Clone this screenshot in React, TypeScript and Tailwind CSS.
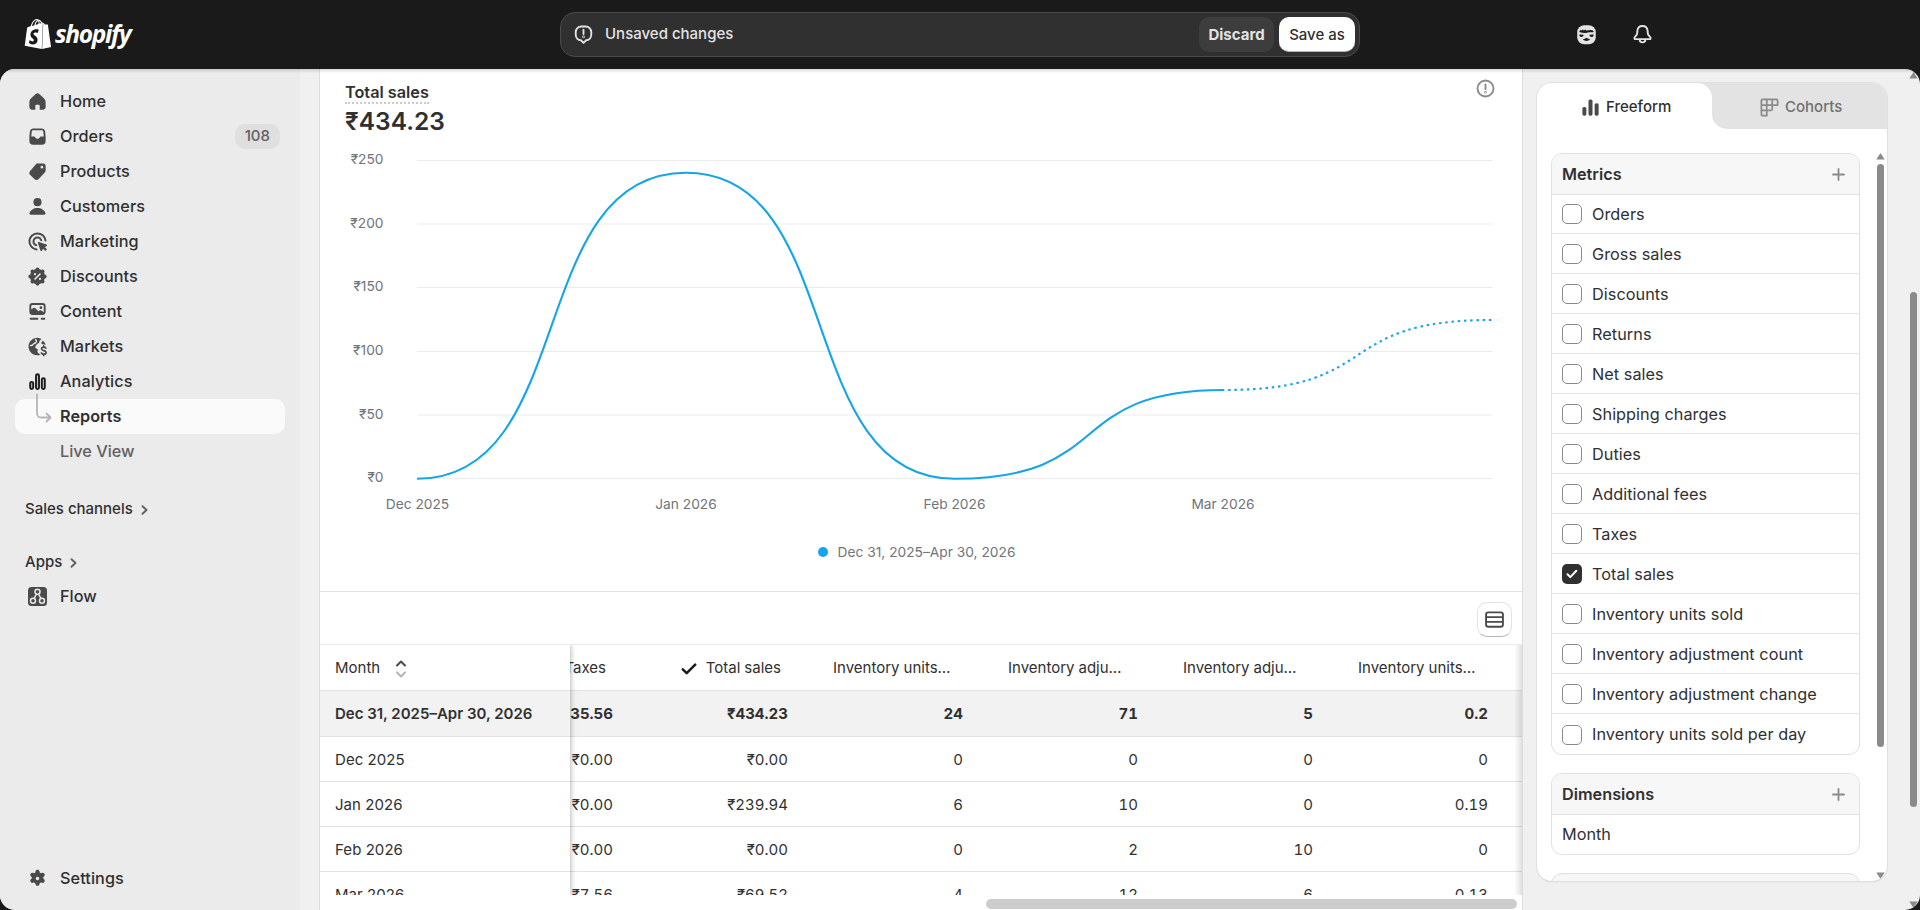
import React from 'react';
import { SiShopify } from 'react-icons/si';

const icons = {
  home: <path fillRule="evenodd" d="M8.6 4.05a2.1 2.1 0 0 1 2.8 0l3.7 3.3a4.2 4.2 0 0 1 1.4 3.15v3.75a2.25 2.25 0 0 1-2.25 2.25h-2.5v-3.25a.75.75 0 0 0-.75-.75h-2a.75.75 0 0 0-.75.75v3.25h-2.5a2.25 2.25 0 0 1-2.25-2.25v-3.75c0-1.2.5-2.35 1.4-3.15z" />,
  orders: <path fillRule="evenodd" d="M6.4 3.5a2.5 2.5 0 0 0-2.45 2.05l-.4 4.1q-.05.3-.05.6v3.25a3 3 0 0 0 3 3h7a3 3 0 0 0 3-3v-3.25q0-.3-.05-.6l-.4-4.1a2.5 2.5 0 0 0-2.45-2.05zm.1 1.5a1.1 1.1 0 0 0-1.1.95l-.4 4.05h2.2c.4 0 .75.25.9.6a2.05 2.05 0 0 0 3.8 0c.15-.35.5-.6.9-.6h2.2l-.4-4.05a1.1 1.1 0 0 0-1.1-.95z" />,
  products: <path fillRule="evenodd" d="M10.6 3.5h3.9a2 2 0 0 1 2 2v3.4a3 3 0 0 1-.85 2.1l-4.5 4.7a2.75 2.75 0 0 1-3.9.05l-2.8-2.7a2.75 2.75 0 0 1 0-3.95l4.1-4.75a2.8 2.8 0 0 1 2.05-.85m2.9 4.1a1.1 1.1 0 1 0 0-2.2 1.1 1.1 0 0 0 0 2.2" />,
  customers: <>
      <circle cx="10" cy="6.5" r="3.25" />
      <path d="M3.6 15.2c.8-2.5 3.4-4.1 6.4-4.1s5.6 1.6 6.4 4.1c.25.8-.4 1.4-1.1 1.4h-10.6c-.7 0-1.35-.6-1.1-1.4" />
    </>,
  marketing: <>
      <path fill="none" stroke="currentColor" strokeWidth="1.6" strokeLinecap="round" d="M16.4 9.2a6.45 6.45 0 1 0-7.2 7.2M13 9a3.2 3.2 0 1 0-4 4" />
      <path d="M10.3 11.2a.72.72 0 0 1 .9-.9l6 2.05a.72.72 0 0 1 .05 1.35l-1.5.7 1.45 1.45a.72.72 0 0 1 0 1l-.35.35a.72.72 0 0 1-1 0l-1.45-1.45-.7 1.5a.72.72 0 0 1-1.35-.05z" />
    </>,
  discounts: <>
      <circle cx="10" cy="10" r="6.1" />
      <circle cx="10" cy="4.3" r="1.6" />
      <circle cx="14" cy="6" r="1.6" />
      <circle cx="15.7" cy="10" r="1.6" />
      <circle cx="14" cy="14" r="1.6" />
      <circle cx="10" cy="15.7" r="1.6" />
      <circle cx="6" cy="14" r="1.6" />
      <circle cx="4.3" cy="10" r="1.6" />
      <circle cx="6" cy="6" r="1.6" />
      <path stroke="#ebebeb" strokeWidth="1.3" strokeLinecap="round" d="M12 8l-4 4" />
      <circle cx="8" cy="8.1" r=".85" fill="#ebebeb" />
      <circle cx="12" cy="11.9" r=".85" fill="#ebebeb" />
    </>,
  content: <>
      <path fillRule="evenodd" d="M6 3.25h8a2.5 2.5 0 0 1 2.5 2.5v4.5a2.5 2.5 0 0 1-2.5 2.5h-8a2.5 2.5 0 0 1-2.5-2.5v-4.5a2.5 2.5 0 0 1 2.5-2.5m-1 5.2 1.7-1.2a1.3 1.3 0 0 1 1.6.1l2.5 2.5.8-.6a1.3 1.3 0 0 1 1.5 0l1.9 1.3v-4.8a1 1 0 0 0-1-1h-8a1 1 0 0 0-1 1zm7.7-.45a1.1 1.1 0 1 0 0-2.2 1.1 1.1 0 0 0 0 2.2" />
      <path fill="none" stroke="currentColor" strokeWidth="1.5" strokeLinecap="round" d="M4.5 15.8h5.5M13.3 15.8h2.2" />
    </>,
  markets: <>
      <path d="M10 3a7 7 0 1 0 2.4 13.5l-1.7-1.2c-.8-.5-1-1.3-.6-2.1l.3-.8-1.7-1.1c-.6-.4-.7-1-.3-1.6l1.1-1.5c.5-.7 1.1-.5 1.6-1 .6-.6 0-1.4.8-2.1l1.3-1.1a7 7 0 0 0-3.2-1" />
      <path fill="none" stroke="#ebebeb" strokeWidth="1.1" strokeLinecap="round" strokeLinejoin="round" d="M8.4 4.3c.9.9 1 1.8.2 2.6-.7.6-1.8.6-2.3 1.5-.3.7-1 1-1.9.7" />
      <path d="M14.3 5.3l-1 1.3c-.5.65-.1 1.5.7 1.6l2.6.4a7 7 0 0 0-2.3-3.3" />
      <path fill="none" stroke="currentColor" strokeWidth="1.35" strokeLinecap="round" strokeLinejoin="round" d="M16.7 11.3c-.4-.6-1.1-.8-1.7-.8-1 0-1.8.5-1.8 1.35 0 2 3.7.9 3.7 2.9 0 .9-.9 1.4-1.9 1.4-.8 0-1.5-.3-1.9-.9M15 9.5v1M15 16.2v1" />
    </>,
  settings: <path fillRule="evenodd" d="M8.4 4.2c.15-.7.7-1.2 1.4-1.2h.4c.7 0 1.25.5 1.4 1.2l.2.9 1 .6.9-.3c.65-.2 1.4.05 1.7.65l.2.35c.35.6.2 1.35-.3 1.8l-.7.65v1.2l.7.6c.5.45.65 1.2.3 1.8l-.2.35c-.3.6-1.05.85-1.7.65l-.9-.3-1 .6-.2.9c-.15.7-.7 1.2-1.4 1.2h-.4c-.7 0-1.25-.5-1.4-1.2l-.2-.9-1-.6-.9.3c-.65.2-1.4-.05-1.7-.65l-.2-.35c-.35-.6-.2-1.35.3-1.8l.7-.6v-1.2l-.7-.65c-.5-.45-.65-1.2-.3-1.8l.2-.35c.3-.6 1.05-.85 1.7-.65l.9.3 1-.6zM10 11.3a1.4 1.4 0 1 0 0-2.8 1.4 1.4 0 0 0 0 2.8" />,
  analytics: <g fill="#c4c4c4" stroke="#1a1a1a" strokeWidth="1.5">
      <rect x="4.15" y="10.25" width="2.4" height="5.7" rx="1.2" />
      <rect x="8.8" y="4.15" width="2.4" height="11.8" rx="1.2" />
      <rect x="13.45" y="7.25" width="2.4" height="8.7" rx="1.2" />
    </g>
};

function Icon({ name }: { name: keyof typeof icons }) {
  return <svg viewBox="0 0 20 20" fill="currentColor" className="h-[25px] w-[25px] shrink-0 text-[#4a4a4a]">
      {icons[name]}
    </svg>;
}

const nav: { label: string; icon: keyof typeof icons; badge?: string }[] = [
  { label: 'Home', icon: 'home' },
  { label: 'Orders', icon: 'orders', badge: '108' },
  { label: 'Products', icon: 'products' },
  { label: 'Customers', icon: 'customers' },
  { label: 'Marketing', icon: 'marketing' },
  { label: 'Discounts', icon: 'discounts' },
  { label: 'Content', icon: 'content' },
  { label: 'Markets', icon: 'markets' },
  { label: 'Analytics', icon: 'analytics' }
];

const metrics = ['Orders', 'Gross sales', 'Discounts', 'Returns', 'Net sales', 'Shipping charges', 'Duties', 'Additional fees', 'Taxes', 'Total sales', 'Inventory units sold', 'Inventory adjustment count', 'Inventory adjustment change', 'Inventory units sold per day'];

// Long headings are already shortened to the column width
const columns = ['Taxes', 'Total sales', 'Inventory units…', 'Inventory adju…', 'Inventory adju…', 'Inventory units…'];

const totals = ['₹35.56', '₹434.23', '24', '71', '5', '0.2'];

const rows = [
  { month: 'Dec 2025', values: ['₹0.00', '₹0.00', '0', '0', '0', '0'] },
  { month: 'Jan 2026', values: ['₹0.00', '₹239.94', '6', '10', '0', '0.19'] },
  { month: 'Feb 2026', values: ['₹0.00', '₹0.00', '0', '2', '10', '0'] },
  { month: 'Mar 2026', values: ['₹7.56', '₹69.52', '4', '12', '6', '0.13'] }
];

function Header() {
  return <header className="flex h-[69px] shrink-0 items-start">
      <div className="flex w-[560px] items-center pl-[23px] pt-[19px] text-white">
        <SiShopify className="h-[30px] w-[30px]" />
        <span className="-mt-px ml-[2px] font-['Open_Sans'] text-[24.5px] leading-[30px] font-bold italic tracking-[-1.3px]">
          shopify
        </span>
      </div>
      <div className="mt-3 flex h-[45px] w-[800px] items-center rounded-[15px] border border-[#4a4a4a] bg-[#303030] pl-[10px] pr-[4px]">
        <svg viewBox="0 0 20 20" fill="none" stroke="#e3e3e3" strokeWidth="1.5" strokeLinecap="round" strokeLinejoin="round" className="h-[25px] w-[25px]">
          <path d="M8.2 3.6h3.6a4.4 4.4 0 0 1 4.4 4.4v2.2a4.4 4.4 0 0 1-4.1 4.4l-2.1 2.1-2.1-2.1a4.4 4.4 0 0 1-4.1-4.4v-2.2a4.4 4.4 0 0 1 4.4-4.4M10 6.2v3.4" />
          <circle cx="10" cy="11.9" r=".3" />
        </svg>
        <span className="ml-[9px] flex-1 text-[15px] font-[550] text-[#e3e3e3]">Unsaved changes</span>
        <button className="h-[35px] w-[75px] rounded-[10px] bg-[#3d3d3d] pt-px text-[15px] font-[650] text-[#e3e3e3]">Discard</button>
        <button className="ml-[5px] h-[35px] w-[76px] rounded-[10px] border-b border-[#b5b5b5] bg-white pt-[2px] text-[15px] font-[550] text-[#303030]">Save as</button>
      </div>
      <div className="flex items-center pl-[214px] pt-[22px]">
        <svg viewBox="0 0 20 20" className="h-[25px] w-[25px]">
          <rect x="2.6" y="2.5" width="14.8" height="15.3" rx="5.6" fill="#e3e3e3" />
          <path fill="#1a1a1a" d="M4.2 7.9c.1-.8.5-1.3 1-1.6l.8.5.9-.8 1 .7 1-.7.9.7 3.4-.3c1.6-.1 2.4.7 2.6 1.6-1.2.6-2.3.1-3.7.1-1.5 0-2.1.7-3.3.7-1.6 0-3.1-.4-4.6-.9" />
          <path fill="#1a1a1a" d="M4.3 9.9l3.4.2a1.8 1.8 0 0 1-3.3 1zM15.7 9.9l-3.4.2a1.8 1.8 0 0 0 3.3 1z" />
          <path d="M7 13.6q1.7.1 3-1 1.3 1.1 3 1-1.4 1.600-3 1.600t-3-1.600" fill="#1a1a1a" />
        </svg>
        <svg viewBox="0 0 20 20" fill="none" stroke="#e3e3e3" strokeWidth="1.5" strokeLinecap="round" strokeLinejoin="round" className="ml-[31px] h-[25px] w-[25px]">
          <path d="M10 3.2c-2.3 0-3.9 1.7-4.1 3.900l-.15 2a2.5 2.5 0 0 1-.6 1.400l-1.400 1.700c-.5.7-.2 1.500.7 1.500h11.100c.9 0 1.200-.8.7-1.500l-1.400-1.700a2.500 2.500 0 0 1-.6-1.400l-.15-2c-.2-2.200-1.800-3.900-4.100-3.900M7.700 14a2.300 2.300 0 0 0 4.600 0" />
        </svg>
      </div>
    </header>;
}

function Chevron() {
  return <svg viewBox="0 0 8 12" fill="none" stroke="#616161" strokeWidth="1.9" strokeLinecap="round" strokeLinejoin="round" className="ml-[8px] h-[12px] w-[8px]">
      <path d="M1.5 2.2l4 3.8-4 3.8" />
    </svg>;
}

function Sidebar() {
  return <nav className="flex w-[300px] shrink-0 flex-col bg-[#ebebeb] px-[15px] pt-[15px] pb-[14px] text-[16.25px] font-[550] text-[#303030]">
      {nav.map(item => <div key={item.label} className="flex h-[35px] items-center pl-[10px]">
          <Icon name={item.icon} />
          <span className="ml-[10px] flex-1 tracking-[0.04px]">{item.label}</span>
          {item.badge && <span className="mr-[5px] flex h-[25px] items-center rounded-[10px] bg-[#dfdfdf] px-[10px] text-[15px] text-[#616161]">
              {item.badge}
            </span>}
        </div>)}
      <div className="relative flex h-[35px] items-center rounded-[10px] bg-[#fafafa] pl-[45px] font-semibold">
        <svg viewBox="0 0 16 30" fill="none" stroke="#b5b5b5" strokeWidth="1.8" strokeLinecap="round" strokeLinejoin="round" className="absolute -top-[6px] left-[21px] h-[30px] w-[16px]">
          <path d="M1 1.5v19a4 4 0 0 0 4 4h9M10.5 20.5l4 4-4 4" />
        </svg>
        Reports
      </div>
      <div className="flex h-[35px] items-center pl-[45px] text-[#616161]">Live View</div>
      <div className="mt-[22px] flex h-[35px] items-center pt-[2px] pl-[10px] text-[15px]">
        Sales channels
        <Chevron />
      </div>
      <div className="mt-[18px] flex h-[35px] items-center pt-[2px] pl-[10px] text-[15px]">
        Apps
        <Chevron />
      </div>
      <div className="flex h-[35px] items-center pl-[10px]">
        <svg viewBox="0 0 25 25" className="h-[25px] w-[25px]" fill="none" stroke="#e8e8e8" strokeWidth="1.5">
          <rect x="3" y="3" width="19" height="19" rx="3.5" fill="#4a4a4a" stroke="none" />
          <circle cx="12.5" cy="7.8" r="2.5" />
          <circle cx="8" cy="16.7" r="2.5" />
          <circle cx="17" cy="16.7" r="2.5" />
          <path d="M11.5 10.2l-2.3 4M13.5 10.2l2.3 4" />
        </svg>
        <span className="ml-[10px]">Flow</span>
      </div>
      <div className="mt-auto flex h-[35px] items-center pl-[10px]">
        <Icon name="settings" />
        <span className="ml-[10px] tracking-[0.06px]">Settings</span>
      </div>
    </nav>;
}

const ticks = [
  { label: '₹250', y: 160.5 },
  { label: '₹200', y: 224 },
  { label: '₹150', y: 287.5 },
  { label: '₹100', y: 351.5 },
  { label: '₹50', y: 415 },
  { label: '₹0', y: 478.5 }
];

const months = [
  { label: 'Dec 2025', x: 417.5 },
  { label: 'Jan 2026', x: 686 },
  { label: 'Feb 2026', x: 954.5 },
  { label: 'Mar 2026', x: 1223 }
];

function Chart() {
  return <svg viewBox="320 140 1202 451" className="h-[451px] w-[1202px] shrink-0" fontSize="13.75" fill="#70757a">
      {ticks.map(tick => <g key={tick.label}>
          <path d={`M417.5 ${tick.y}H1492`} stroke="#ebebeb" />
          <text x="383.5" y={tick.y + 3.5} textAnchor="end">{tick.label}</text>
        </g>)}
      {months.map(month => <text key={month.label} x={month.x} y="509" textAnchor="middle">{month.label}</text>)}
      <g fill="none" stroke="#14a5e8" strokeWidth="2.1">
        <path d="M417 478.8C578 478.8 525 172.8 686 172.8S793 478.8 954.5 478.8S1062 390 1224 390" />
        <path d="M1224 390C1385 390 1331 320 1492 320" strokeDasharray="2.5 3.75" strokeDashoffset="-4" />
      </g>
    </svg>;
}

function HeaderCell({ label }: { label: string }) {
  return <div className="flex w-[175px] shrink-0 items-center justify-end pr-[32px]">
      {label === 'Total sales' && <svg viewBox="0 0 16 12" fill="none" stroke="#1a1a1a" strokeWidth="2.5" strokeLinecap="round" strokeLinejoin="round" className="mr-[9px] h-[12px] w-[16px]">
          <path d="M1.8 6.3l3.9 3.9 8.5-8.5" />
        </svg>}
      <span className={label.endsWith('…') ? 'w-[123px]' : ''}>{label}</span>
    </div>;
}

function Table() {
  return <div className="relative flex h-[251px] shrink-0 overflow-hidden border-t border-[#ebebeb] text-[15px] text-[#303030]">
      <div className="z-10 w-[250px] shrink-0 bg-white shadow-[1px_0_5px_rgba(0,0,0,0.28)]">
        <div className="flex h-[45px] items-center pt-[2px] pl-[15px]">
          Month
          <svg viewBox="0 0 12 20" fill="none" strokeWidth="2" strokeLinecap="round" strokeLinejoin="round" className="ml-[15px] h-[20px] w-[12px]">
            <path stroke="#4a4a4a" d="M2 6.5l4-4 4 4" />
            <path stroke="#b5b5b5" d="M2 13.5l4 4 4-4" />
          </svg>
        </div>
        <div className="flex h-[47px] items-center border-y border-[#e3e3e3] bg-[#f2f2f2] pt-[2px] pl-[15px] font-semibold">
          Dec 31, 2025–Apr 30, 2026
        </div>
        {rows.map(row => <div key={row.month} className="flex h-[45px] items-center border-b border-[#e3e3e3] pt-[2px] pl-[15px] tracking-[0.06px]">
            {row.month}
          </div>)}
      </div>
      <div className="-ml-[107px] w-[1059px] shrink-0 tabular-nums">
        <div className="flex h-[45px] items-center pt-[2px]">
          {columns.map((label, i) => <HeaderCell key={i} label={label} />)}
        </div>
        <div className="flex h-[47px] items-center border-y border-[#e3e3e3] bg-[#f2f2f2] pt-[2px] font-[650]">
          {totals.map((value, i) => <div key={i} className="w-[175px] pr-[25px] text-right">{value}</div>)}
        </div>
        {rows.map(row => <div key={row.month} className="flex h-[45px] items-center border-b border-[#e3e3e3] pt-[2px]">
            {row.values.map((value, i) => <div key={i} className="w-[175px] pr-[25px] text-right">{value}</div>)}
          </div>)}
      </div>
      <div className="absolute top-0 right-0 h-full w-[8px] bg-linear-to-l from-black/12 to-transparent" />
    </div>;
}

function Report() {
  return <main className="ml-[19px] flex w-[1204px] shrink-0 flex-col border-x border-[#dcdcdc] bg-white">
      <div className="flex h-[71px] shrink-0 justify-between pt-[13px] pl-[25px] text-[#303030]">
        <div>
          <div className="w-fit border-b-2 border-dotted border-[#cccccc] text-[16.25px] leading-[20px] font-semibold">
            Total sales
          </div>
          <div className="mt-[3px] text-[24.5px] leading-[28px] font-semibold">₹434.23</div>
        </div>
        <svg viewBox="0 0 20 20" fill="none" stroke="#8a8a8a" strokeWidth="1.5" strokeLinecap="round" className="mt-[-6px] mr-[24px] h-[25px] w-[25px]">
          <circle cx="10" cy="10" r="6.4" />
          <path d="M10 6.8v3.7" />
          <circle cx="10" cy="13" r=".3" />
        </svg>
      </div>
      <Chart />
      <div className="-mt-[54px] flex h-[54px] shrink-0 items-start justify-center pt-[5px] text-[13.75px] text-[#70757a]">
        <span className="mt-[5px] mr-[10px] h-[10px] w-[10px] rounded-full bg-[#14a5f0]" />
        <span className="mr-[9px]">Dec 31, 2025–Apr 30, 2026</span>
      </div>
      <div className="flex h-[53px] shrink-0 justify-end border-t border-[#e3e3e3] pt-[10px] pr-[10px]">
        <button className="flex h-[35px] w-[35px] items-center justify-center rounded-[10px] border border-[#e3e3e3] border-b-[#b5b5b5] bg-white">
          <svg viewBox="0 0 20 20" fill="none" stroke="#4a4a4a" strokeWidth="1.5" className="-mt-px h-[25px] w-[25px]">
            <rect x="3.25" y="4.25" width="13.5" height="11.5" rx="1.8" />
            <path d="M3.5 8.1h13M3.5 11.9h13" />
          </svg>
        </button>
      </div>
      <Table />
      <div className="mt-[4px] ml-[666px] h-[10px] w-[531px] rounded-full bg-[#cccccc]" />
    </main>;
}

function CardHeader({ title }: { title: string }) {
  return <div className="flex h-[41px] items-center justify-between border-b border-[#e3e3e3] bg-[#f7f7f7] pr-[14px] pl-[10px] font-semibold">
      {title}
      <svg viewBox="0 0 13 13" stroke="#8a8a8a" strokeWidth="1.8" strokeLinecap="round" className="h-[13px] w-[13px]">
        <path d="M6.5 1v11M1 6.5h11" />
      </svg>
    </div>;
}

function ArrowUp() {
  return <svg viewBox="0 0 9 7" fill="#8a8a8a" className="h-[7px] w-[9px]"><path d="M4.5 0l4.2 6.5h-8.4z" /></svg>;
}

function ArrowDown() {
  return <svg viewBox="0 0 9 7" fill="#8a8a8a" className="h-[7px] w-[9px]"><path d="M4.5 7l4.2-6.5h-8.4z" /></svg>;
}

function Panel() {
  return <aside className="mt-[14px] ml-[14px] flex h-[798px] w-[350px] shrink-0 flex-col overflow-hidden rounded-[15px] bg-white text-[16.25px] text-[#303030] shadow-[0_0_0_1px_#e0e0e0,0_1px_1px_#b5b5b5]">
      <div className="flex h-[46px] shrink-0 bg-[#e3e3e3] text-[15px] font-[550]">
        <div className="flex w-[175px] items-center rounded-tr-[15px] bg-white pt-[2px] pl-[41px]">
          <svg viewBox="0 0 20 20" fill="#4a4a4a" className="h-[25px] w-[25px]">
            <rect x="3.5" y="9.5" width="3.2" height="7" rx="1.3" />
            <rect x="8.4" y="3.5" width="3.2" height="13" rx="1.3" />
            <rect x="13.3" y="6.5" width="3.2" height="10" rx="1.3" />
          </svg>
          <span className="ml-[3px]">Freeform</span>
        </div>
        <div className="flex-1 bg-white">
          <div className="flex h-full items-center rounded-bl-[15px] bg-[#e3e3e3] pt-[2px] pl-[45px] text-[#707070]">
            <svg viewBox="0 0 20 20" fill="none" stroke="#8a8a8a" strokeWidth="1.4" strokeLinejoin="round" className="h-[25px] w-[25px]">
              <path d="M4.5 3.5h11a1 1 0 0 1 1 1v3.5h-13v-3.5a1 1 0 0 1 1-1M3.5 8v7.5a1 1 0 0 0 1 1h3.3v-13M3.5 12.2h7.7a1 1 0 0 0 1-1v-7.7" />
            </svg>
            <span className="ml-[3px]">Cohorts</span>
          </div>
        </div>
      </div>
      <div className="flex min-h-0 flex-1 pt-[24px] pl-[14px]">
        <div className="w-[309px] shrink-0">
          <section className="overflow-hidden rounded-[11px] border border-[#e0e0e0]">
            <CardHeader title="Metrics" />
            {metrics.map(metric => <label key={metric} className="flex h-[40px] items-center border-b border-[#e3e3e3] pt-px pl-[10px] first-of-type:h-[39px] first-of-type:pt-0 last:border-b-0">
                {metric === 'Total sales' ? <span className="flex h-[20px] w-[20px] items-center justify-center rounded-[5px] bg-[#303030]">
                    <svg viewBox="0 0 12 10" fill="none" stroke="white" strokeWidth="2" strokeLinecap="round" strokeLinejoin="round" className="h-[10px] w-[12px]">
                      <path d="M1.5 5.3l2.8 2.8 6-6.3" />
                    </svg>
                  </span> : <span className="h-[20px] w-[20px] rounded-[5px] border border-[#8a8a8a]" />}
                <span className="ml-[10px] tracking-[0.05px]">{metric}</span>
              </label>)}
          </section>
          <section className="mt-[18px] overflow-hidden rounded-[11px] border border-[#e0e0e0]">
            <CardHeader title="Dimensions" />
            <div className="flex h-[39px] items-center pl-[10px]">Month</div>
          </section>
          <section className="mt-[18px] h-[60px] rounded-t-[11px] border border-[#e0e0e0] bg-[#f7f7f7]" />
        </div>
        <div className="ml-[16px] flex flex-col items-center">
          <ArrowUp />
          <div className="mt-[4px] h-[583px] w-[7px] rounded-full bg-[#8a8a8a]" />
          <div className="mt-auto mb-[2px]">
            <ArrowDown />
          </div>
        </div>
      </div>
    </aside>;
}

export default function App() {
  return <div className="flex h-[910px] w-[1920px] flex-col overflow-hidden bg-[#1a1a1a] font-['Inter',sans-serif]">
      <Header />
      <div className="relative flex h-[841px] overflow-hidden rounded-[15px] bg-[#f0f0f0]">
        <Sidebar />
        <Report />
        <Panel />
        <div className="ml-auto flex flex-col items-center pt-[3px] pr-[2px] pb-[2px]">
          <ArrowUp />
          <div className="mt-[213px] h-[515px] w-[7px] rounded-full bg-[#8a8a8a]" />
          <div className="mt-auto">
            <ArrowDown />
          </div>
        </div>
        <div className="pointer-events-none absolute inset-x-0 top-0 z-20 h-[4px] bg-linear-to-b from-black/15 to-transparent" />
      </div>
    </div>;
}
